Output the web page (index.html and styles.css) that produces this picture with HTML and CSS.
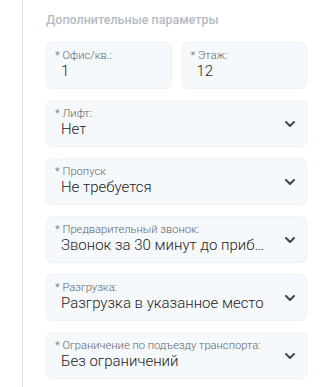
FILE: index.html
```html
<!DOCTYPE html>
<html lang="ru">
<head>
<meta charset="utf-8">
<link rel="stylesheet" href="styles.css">
</head>
<body>
<div class="panel">
  <div class="title">Дополнительные параметры</div>
  <div class="fields">
    <div class="row2">
      <div class="field"><div class="label">* Офис/кв.:</div><div class="value">1</div></div>
      <div class="field"><div class="label">* Этаж:</div><div class="value">12</div></div>
    </div>
    <div class="field select"><div class="label">* Лифт:</div><div class="value">Нет</div>
      <svg class="chev" viewBox="0 0 10 6"><path d="M1 1l4 4 4-4"/></svg></div>
    <div class="field select"><div class="label">* Пропуск</div><div class="value">Не требуется</div>
      <svg class="chev" viewBox="0 0 10 6"><path d="M1 1l4 4 4-4"/></svg></div>
    <div class="field select"><div class="label">* Предварительный звонок:</div><div class="value">Звонок за 30 минут до прибытия</div>
      <svg class="chev" viewBox="0 0 10 6"><path d="M1 1l4 4 4-4"/></svg></div>
    <div class="field select"><div class="label">* Разгрузка:</div><div class="value">Разгрузка в указанное место</div>
      <svg class="chev" viewBox="0 0 10 6"><path d="M1 1l4 4 4-4"/></svg></div>
    <div class="field select"><div class="label">* Ограничение по подъезду транспорта:</div><div class="value">Без ограничений</div>
      <svg class="chev" viewBox="0 0 10 6"><path d="M1 1l4 4 4-4"/></svg></div>
  </div>
</div>
</body>
</html>
```
FILE: styles.css
```css
html, body { margin: 0; padding: 0; background: #fff; }
body { font-family: Roboto, "Noto Sans", sans-serif; }
.panel {
  margin-left: 22px;
  border-left: 1px solid #dfe3e8;
  height: 387px;
  box-sizing: border-box;
  padding: 12px 17px 0 23px;
}
.title {
  font-size: 12.5px;
  font-weight: 500;
  color: #b4bbc3;
  line-height: 16px;
  margin-bottom: 14px;
}
.fields { display: flex; flex-direction: column; gap: 11px; }
.row2 { display: grid; grid-template-columns: 1fr 1fr; gap: 10px; }
.field {
  position: relative;
  height: 47px;
  box-sizing: border-box;
  background: #f6f9fc;
  border: 1px solid #eef2f6;
  border-radius: 6px;
  padding: 6px 10px 0 8px;
}
.select { padding-right: 34px; }
.label {
  font-size: 11.2px;
  line-height: 13px;
  font-weight: 300;
  color: #5f636a;
  white-space: nowrap;
}
.value {
  font-size: 15px;
  line-height: 18px;
  font-weight: 300;
  color: #1f2226;
  padding-left: 6px;
  white-space: nowrap;
  overflow: hidden;
  text-overflow: ellipsis;
}
.chev {
  position: absolute;
  right: 11px;
  top: 20px;
  width: 10px;
  height: 6px;
  fill: none;
  stroke: #3c4858;
  stroke-width: 2;
  stroke-linecap: round;
  stroke-linejoin: round;
}
```
